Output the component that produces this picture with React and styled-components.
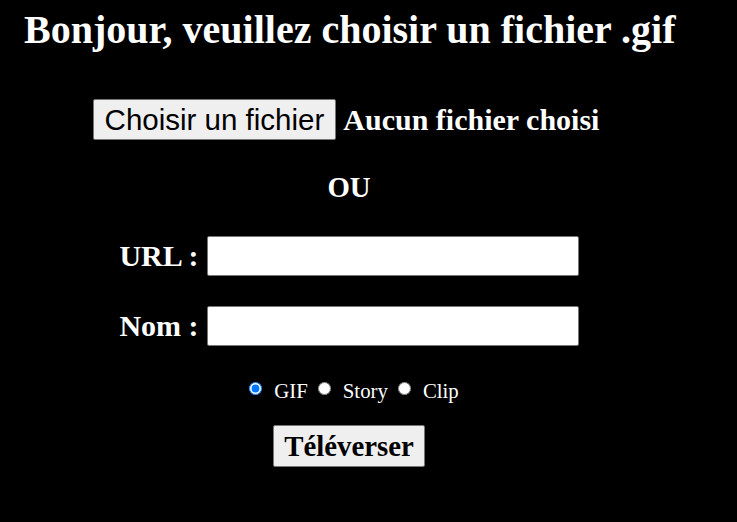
import styled, { createGlobalStyle } from "styled-components";

const GlobalStyle = createGlobalStyle`
  html, body {
    margin: 0;
    padding: 0;
    background: #000;
  }
  body {
    font-family: "Liberation Serif", "Times New Roman", serif;
    color: #fff;
    min-height: 522px;
  }
`;

const Page = styled.div`
  width: 737px;
  height: 522px;
  background: #000;
`;

const Title = styled.h1`
  margin: 0;
  padding: 7px 0 0 24px;
  font-size: 40px;
  line-height: 46px;
  font-weight: bold;
`;

const Form = styled.form`
  width: 698px;
  display: flex;
  flex-direction: column;
  align-items: center;
  font-size: 28.8px;
  font-weight: bold;
`;

const FileRow = styled.div`
  margin-top: 46px;
  padding-right: 6px;
  display: flex;
  align-items: center;
  gap: 7px;
`;

const PickButton = styled.button`
  font-family: "Liberation Sans", Arial, sans-serif;
  font-size: 29.5px;
  font-weight: normal;
  line-height: 33px;
  height: 41px;
  padding: 2px 11px;
  color: #000;
  background: #efefef;
  border: 1px solid #767676;
  border-radius: 2px;
`;

const FileName = styled.span`
  font-size: 30px;
  line-height: 33px;
`;

const Or = styled.div`
  margin-top: 31px;
  line-height: 33px;
`;

const Field = styled.label`
  margin-top: ${(p) => p.$top}px;
  display: flex;
  align-items: center;
  gap: 8px;
  height: 40px;
  font-size: 30px;
`;

const TextInput = styled.input`
  box-sizing: border-box;
  width: 372px;
  height: 40px;
  border: 1px solid #767676;
  border-radius: 2px;
  background: #fff;
  font-size: 20px;
  padding: 0 4px;
`;

const Choices = styled.div`
  margin-top: 34px;
  height: 22px;
  display: flex;
  align-items: center;
  font-size: 20.8px;
  font-weight: normal;
  line-height: 22px;
  padding-left: 20px;
`;

const Choice = styled.label`
  display: flex;
  align-items: center;
  gap: 12px;
  margin-right: 10px;
`;

const Radio = styled.input`
  width: 13px;
  height: 13px;
  margin: 0 0 5px 0;
  accent-color: #0075ff;
`;

const Submit = styled.button`
  margin-top: 23px;
  height: 42px;
  padding: 0 10px;
  font-family: "Liberation Serif", "Times New Roman", serif;
  font-size: 28.8px;
  font-weight: bold;
  line-height: 33px;
  color: #000;
  background: #efefef;
  border: 1px solid #767676;
  border-radius: 2px;
`;

export default function App() {
  return (
    <Page>
      <GlobalStyle />
      <Title>Bonjour, veuillez choisir un fichier .gif</Title>
      <Form onSubmit={(e) => e.preventDefault()}>
        <FileRow>
          <PickButton type="button">Choisir un fichier</PickButton>
          <FileName>Aucun fichier choisi</FileName>
        </FileRow>
        <Or>OU</Or>
        <Field $top={32}>
          URL :
          <TextInput type="text" />
        </Field>
        <Field $top={30}>
          Nom :
          <TextInput type="text" />
        </Field>
        <Choices>
          <Choice>
            <Radio type="radio" name="kind" defaultChecked />
            GIF
          </Choice>
          <Choice>
            <Radio type="radio" name="kind" />
            Story
          </Choice>
          <Choice>
            <Radio type="radio" name="kind" />
            Clip
          </Choice>
        </Choices>
        <Submit type="submit">Téléverser</Submit>
      </Form>
    </Page>
  );
}
